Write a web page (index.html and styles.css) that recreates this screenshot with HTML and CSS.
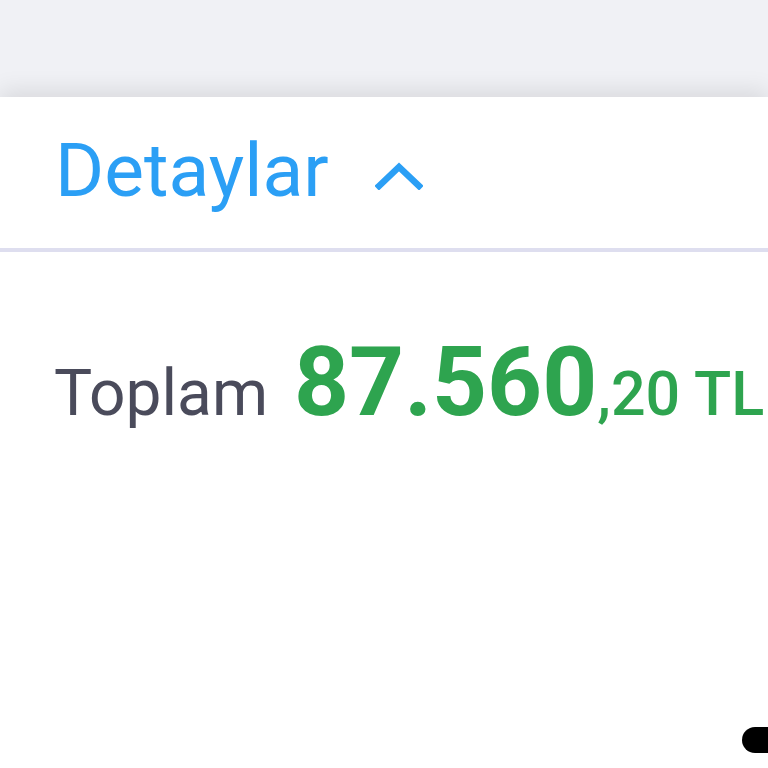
FILE: index.html
```html
<!DOCTYPE html>
<html>
<head>
<meta charset="utf-8">
<link rel="stylesheet" href="styles.css">
</head>
<body>
<div class="top"></div>
<div class="sheet">
  <div class="header">
    <span class="title">Detaylar</span>
    <svg class="chev" width="48" height="30" viewBox="0 0 48 30"><path d="M4 26 L24 7 L44 26" fill="none" stroke="#2b9ff5" stroke-width="6.5" stroke-linecap="square"/></svg>
  </div>
  <div class="divider"></div>
  <div class="total">
    <span class="label">Toplam</span>
    <span class="big">87.560</span><span class="small">,20 TL</span>
  </div>
  <div class="pill"></div>
</div>
</body>
</html>
```
FILE: styles.css
```css
html, body { margin: 0; padding: 0; }
body {
  width: 768px; height: 768px; overflow: hidden;
  background: #f0f1f5;
  font-family: Roboto, "Liberation Sans", sans-serif;
  position: relative;
}
.top { height: 97px; background: #f0f1f5; }
.sheet {
  background: #fff;
  height: 671px;
  box-shadow: 0 -6px 22px rgba(0,0,0,0.10);
  position: relative;
}
.header {
  height: 151px;
  display: flex;
  align-items: center;
  padding-left: 55px;
  padding-bottom: 4px;
  box-sizing: border-box;
}
.title {
  color: #2b9ff5;
  font-size: 75px;
  line-height: 1;
}
.chev { margin-left: 46px; margin-top: 8px; }
.divider { height: 4px; background: #dedeef; }
.total {
  padding-left: 54px;
  padding-top: 82px;
  white-space: nowrap;
  line-height: 1;
  display: flex;
  align-items: baseline;
}
.label { color: #4a4b5b; font-size: 64px; margin-right: 26px; }
.big { color: #2ea44f; font-size: 96px; font-weight: 700; }
.small { color: #2ea44f; font-size: 61px; font-weight: 500; }
.pill {
  position: absolute;
  left: 742px; top: 630px;
  width: 60px; height: 26px;
  border-radius: 13px;
  background: #000;
}
```
